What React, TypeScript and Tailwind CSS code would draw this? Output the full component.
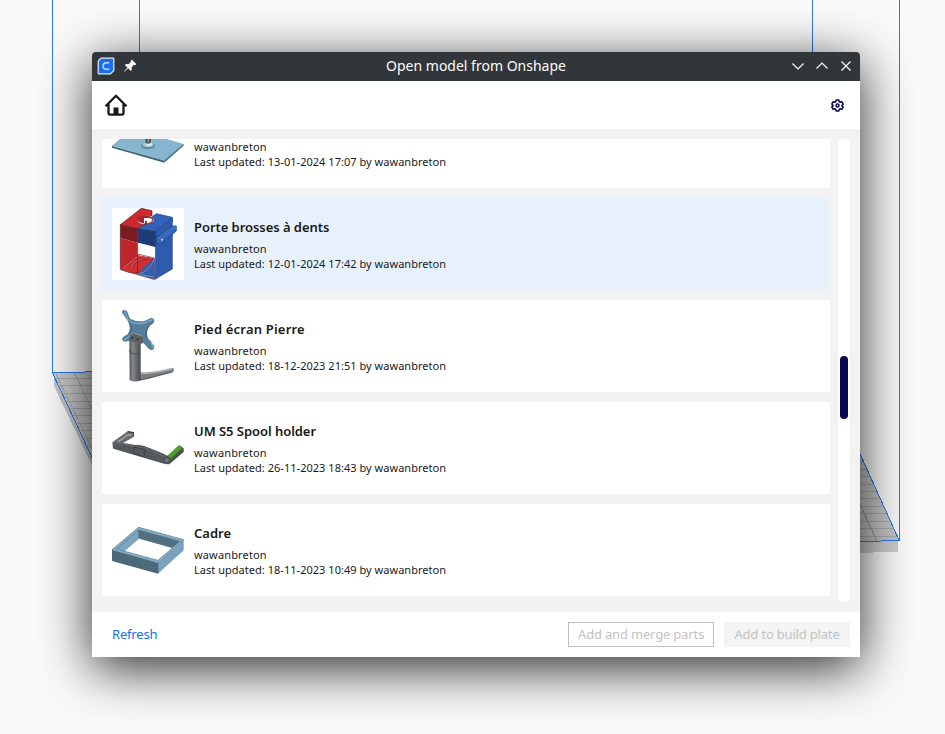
import type { ReactNode } from "react";

type Model = {
  title?: string;
  updated: string;
  art: ReactNode;
  selected?: boolean;
  tracking?: string;
};

const PlateArt = () => (
  <svg viewBox="30 -72 216 216" className="size-[72px]">
    <path d="M30 47 L90 -4 L245 42 L187 92Z" fill="#86b5cf" />
    <path d="M30 47 L187 91 L187 98 L30 53Z" fill="#3f6376" />
    <path d="M187 91 L245 41 L245 47 L187 98Z" fill="#4b758c" />
    <path d="M32 48 L187 91" stroke="#a9d2e6" strokeWidth="2" />
    <ellipse cx="138" cy="46" rx="21" ry="11" fill="#5c8196" />
    <ellipse cx="138" cy="43" rx="18" ry="9" fill="#9fbfce" />
    <ellipse cx="140" cy="42" rx="10" ry="6" fill="#dbe9ef" />
    <path d="M130 0H147V38Q138 44 130 38Z" fill="#4c5860" />
    <path d="M139 0V38" stroke="#8c989e" strokeWidth="4" />
  </svg>
);

const ToothbrushArt = () => (
  <svg viewBox="30 30 216 216" className="size-[72px] bg-white" strokeLinejoin="round">
    <path d="M55 80L118 31L150 38V53Q132 48 112 57Q102 66 110 75Q120 82 133 76L132 86L107 91Z" fill="#d1262b" stroke="#471c25" strokeWidth="2" />
    <path d="M55 80L107 91V134L55 120Z" fill="#7b1b20" />
    <path d="M55 120L107 134V172L55 214Z" fill="#bf252a" />
    <path d="M55 214L107 171L158 180V244Z" fill="#cf2d32" />
    <path d="M107 229L125 208L158 179V244Z" fill="#315fae" />
    <path d="M107 91L133 78Q148 78 156 69Q158 62 149 57L163 47L211 58V71L162 100Z" fill="#3261b7" stroke="#1e3e7d" strokeWidth="2" />
    <path d="M107 91L162 100V148L107 134Z" fill="#203c78" />
    <path d="M162 100L211 60V213L159 244Z" fill="#2e5bad" stroke="#244886" strokeWidth="2" />
    <path d="M107 134L159 148V181L107 170Z" fill="#fff" />
    <path d="M107 66Q104 55 119 53Q135 49 149 57Q159 65 148 74Q137 80 129 76V68H142V60H126V75Q112 76 107 66Z" fill="#9f2630" />
    <path d="M134 61Q147 57 151 65Q149 73 135 76Z" fill="#fff" />
    <path d="M162 120L211 84H223V99L178 137H163Z" fill="#3264b7" stroke="#203f7d" strokeWidth="2" />
    <path d="M165 123L213 87L221 89L184 118" fill="none" stroke="#5b8bd0" strokeWidth="2" />
    <ellipse cx="180" cy="125" rx="4" ry="5" fill="#cce1f8" stroke="#244b90" strokeWidth="2" />
    <g fill="none" stroke="#812531" strokeWidth="2">
      <path d="M58 211L111 169L157 180M59 214Q76 224 96 225Q130 226 153 196" />
      <path d="M84 211Q84 187 119 180Q145 176 153 187M92 215Q91 193 125 184Q142 181 151 187" />
    </g>
    <g fill="none" stroke="#eb777a" strokeWidth="1.5">
      <path d="M63 211L109 174L151 183M88 213Q87 190 120 183" />
    </g>
    <path d="M108 228Q124 225 138 212Q151 200 157 182M116 230L155 237" fill="none" stroke="#8cb0e0" strokeWidth="2" />
    <path d="M55 80V215L158 245M107 91V225" fill="none" stroke="#57202f" strokeWidth="2" />
  </svg>
);

const MonitorArt = () => (
  <svg viewBox="30 30 216 216" className="size-[72px]">
    <defs>
      <linearGradient id="post" x1="0" x2="1">
        <stop stopColor="#4f5356" /><stop offset=".3" stopColor="#85898b" />
        <stop offset=".65" stopColor="#66696b" /><stop offset="1" stopColor="#484b4d" />
      </linearGradient>
    </defs>
    <path d="M59 36Q65 25 75 34L84 56Q108 68 129 62L145 55Q156 51 157 62Q157 70 142 78Q130 93 138 115L156 137Q160 149 149 150Q143 151 132 137Q118 119 98 120L76 124Q64 129 60 117Q61 111 77 103Q89 88 78 64Z" fill="#527f9b" />
    <path d="M68 35L79 62Q96 74 127 69L151 59M68 119L85 108M144 121L154 143" fill="none" stroke="#80a9c1" strokeWidth="4" strokeLinecap="round" />
    <path d="M79 63Q96 80 83 104M143 77Q127 93 134 115" fill="none" stroke="#3c657d" strokeWidth="3" />
    <path d="M111 217L139 219Q170 216 213 204Q220 209 212 217L141 236Q119 241 108 243Z" fill="#7a7e80" />
    <path d="M113 220Q151 220 211 206" fill="none" stroke="#b2b6b8" strokeWidth="5" />
    <path d="M109 240L143 233L211 216" fill="none" stroke="#4a4d4f" strokeWidth="2" />
    <path d="M82 112Q99 101 116 117V239Q99 250 83 240Z" fill="url(#post)" />
    <path d="M86 101L94 97L123 107V130L113 131L82 122Z" fill="#5c6164" />
    <path d="M85 104L94 98L121 108" fill="none" stroke="#9ca1a4" strokeWidth="3" />
    <circle cx="90" cy="113" r="3" fill="#292c2e" /><circle cx="107" cy="118" r="3" fill="#292c2e" />
    <path d="M84 158Q99 166 114 160M82 147L85 158" fill="none" stroke="#3d4245" strokeWidth="2" />
  </svg>
);

const SpoolArt = () => (
  <svg viewBox="30 30 216 216" className="size-[72px]" strokeLinejoin="round">
    <path d="M32 120L77 88L95 91L96 104L58 126Z" fill="#686b6e" />
    <path d="M48 120L78 98L91 99" fill="none" stroke="#9c9fa1" strokeWidth="5" />
    <path d="M77 89L94 92V103" fill="none" stroke="#414446" strokeWidth="4" />
    <path d="M31 121Q39 117 51 121L101 129L127 132L180 153L202 164V187L184 184L33 139Z" fill="#55595b" />
    <path d="M34 122L52 123L105 134L127 136L184 163" fill="none" stroke="#707476" strokeWidth="2" />
    <path d="M34 139L183 183L200 186" fill="none" stroke="#3b3f41" strokeWidth="2" />
    <path d="M97 135L127 143V164L96 155ZM98 136L107 129L128 135" fill="none" stroke="#35393b" strokeWidth="2" />
    <path d="M196 161L232 130L245 139V150L202 187Z" fill="#4b504f" />
    <path d="M197 161L231 130L242 138L206 170Z" fill="#4f9a2c" />
    <path d="M199 160L231 131" stroke="#6cb33f" strokeWidth="3" />
    <circle cx="195" cy="175" r="8" fill="#686d70" stroke="#404446" strokeWidth="2" />
    <circle cx="194" cy="173" r="3" fill="#85898b" />
  </svg>
);

const FrameArt = () => (
  <svg viewBox="30 30 216 216" className="size-[72px]" strokeLinejoin="round">
    <path fillRule="evenodd" d="M30 137L110 69L245 107L167 177ZM67 142L112 103L211 132L168 169Z" fill="#82adc8" />
    <path d="M110 78L234 112L212 132L112 104Z" fill="#50707f" />
    <path d="M43 135L110 78V104L67 142Z" fill="#7ba5be" />
    <path d="M30 137L168 177V209L30 171Z" fill="#4d6978" />
    <path d="M168 177L245 107V139L168 209Z" fill="#79a3bd" />
    <path d="M30 137L110 70L245 107L168 177ZM43 135L110 78L234 112L168 169Z" fill="none" stroke="#557b92" strokeWidth="2" />
    <path d="M34 137L111 74L240 108L168 173Z" fill="none" stroke="#86aec5" strokeWidth="3" />
    <path d="M110 78V104M168 177V208" stroke="#3b596b" strokeWidth="1.5" />
  </svg>
);

const models: Model[] = [
  { updated: "13-01-2024 17:07", art: <PlateArt /> },
  { title: "Porte brosses à dents", updated: "12-01-2024 17:42", art: <ToothbrushArt />, selected: true, tracking: "tracking-[-0.05px]" },
  { title: "Pied écran Pierre", updated: "18-12-2023 21:51", art: <MonitorArt />, tracking: "tracking-[0.2px]" },
  { title: "UM S5 Spool holder", updated: "26-11-2023 18:43", art: <SpoolArt />, tracking: "tracking-[-0.05px]" },
  { title: "Cadre", updated: "18-11-2023 10:49", art: <FrameArt /> },
];

const leftRows = [378, 385, 393, 401, 408, 415, 423, 430, 438, 446];
const rightRows = [461, 469, 476, 484, 491, 498, 506, 513, 521, 528, 536];

function BuildVolume() {
  return (
    <svg viewBox="0 0 945 734" className="absolute inset-0 h-[734px] w-[945px]" shapeRendering="crispEdges">
      <defs>
        <clipPath id="leftBed"><path d="M53 373L96 371V466Z" /></clipPath>
        <clipPath id="rightBed"><path d="M856 445L899 540L856 542Z" /></clipPath>
      </defs>
      <path d="M54 375V386L96 474V460Z" fill="#c6c6c6" />
      <path d="M856 540H898V552H873V553H856Z" fill="#cdcdcd" />
      <path d="M53 373L96 371V466Z" fill="#c9c9c9" />
      <path d="M856 445L899 540L856 542Z" fill="#c6c6c6" />
      <g clipPath="url(#leftBed)" stroke="#aaa" fill="none">
        {leftRows.map((y) => <path key={y} d={`M53 ${y + 0.5}H96`} />)}
        <path d="M74 372L96 418" stroke="#a3a3a3" />
        <path d="M56 374L96 457" stroke="#a8a8a8" />
      </g>
      <g clipPath="url(#rightBed)" stroke="#aaa" fill="none">
        {rightRows.map((y) => <path key={y} d={`M856 ${y + 0.5}H899`} />)}
        <path d="M856 496L877 541" stroke="#999" />
      </g>
      <g fill="none" stroke="#2878f0">
        <path d="M52.5 0V373.5M812.5 0V60M899.5 0V540.5" />
        <path d="M53 372.5H85M85 371.5H96M53 374L96 466M856 445L899 540M899 540.5H881M881 541.5H856" />
      </g>
      <path d="M139.5 0V60" stroke="#707070" />
    </svg>
  );
}

function TitleBar() {
  return (
    <div className="grid h-[29px] shrink-0 grid-cols-[1fr_auto_1fr] items-center rounded-t-[4px] bg-[#31363b] pb-[2px] text-[#fcfcfc]">
      <div className="flex items-center gap-[7px] pl-[5px]">
        <svg viewBox="0 0 18 18" className="size-[18px]">
          <path d="M4 1.2H16.2Q16.8 1.2 16.8 1.8V13.5L13.5 16.8H1.8Q1.2 16.8 1.2 16.2V4Z" fill="#196ef0" stroke="#e5eefb" strokeWidth="1.2" />
          <path d="M12.3 5.8H9.2Q6.1 5.8 6.1 9T9.2 12.2H12.3" fill="none" stroke="#c7dcfb" strokeWidth="1.4" />
        </svg>
        <svg viewBox="0 0 16 16" className="size-4" fill="#fcfcfc">
          <path d="M9 2.2L10 1.8L14.2 6L13.7 7L11.7 7.1L9.5 9.4L9.8 12L8.8 13L6.2 10.3L2.4 13.8L2 13.4L5.5 9.6L2.9 6.9L4 6L6.5 6.3L8.8 4.1Z" />
        </svg>
      </div>
      <div className="text-[14px] leading-[27px]">Open model from Onshape</div>
      <div className="flex justify-end gap-2 pr-[6px]">
        <svg viewBox="0 0 16 16" className="size-4" fill="none" stroke="currentColor" strokeWidth="1.2"><path d="M2.5 5.5L8 11L13.5 5.5" /></svg>
        <svg viewBox="0 0 16 16" className="size-4" fill="none" stroke="currentColor" strokeWidth="1.2"><path d="M2.5 10.5L8 5L13.5 10.5" /></svg>
        <svg viewBox="0 0 16 16" className="size-4" fill="none" stroke="currentColor" strokeWidth="1.2"><path d="M3.5 3.5L12.5 12.5M12.5 3.5L3.5 12.5" /></svg>
      </div>
    </div>
  );
}

function ModelRow({ model }: { model: Model }) {
  return (
    <div className={`flex h-[92px] shrink-0 items-center gap-[10px] px-[10px] ${model.selected ? "bg-[#e7f1fc]" : "bg-white"}`}>
      {model.art}
      <div className="flex flex-col pb-px text-[11px] leading-[15px] whitespace-nowrap text-[#191919]">
        <div className={`mb-1 h-5 text-[13px] leading-5 font-semibold ${model.tracking ?? ""}`}>{model.title}</div>
        <div className="tracking-[0.15px]">wawanbreton</div>
        <div className="tracking-[0.03px]">Last updated: {model.updated} by wawanbreton</div>
      </div>
    </div>
  );
}

export default function App() {
  return (
    <div className="relative h-[734px] w-[945px] overflow-hidden bg-[#fafafa] font-['Noto_Sans',sans-serif]">
      <BuildVolume />
      <div className="absolute top-[52px] left-[92px] flex h-[605px] w-[768px] flex-col rounded-t-[4px] bg-white shadow-[0_11px_52px_rgba(0,0,0,0.84)]">
        <TitleBar />
        <div className="flex h-12 shrink-0 items-center justify-between pr-4 pl-3">
          <svg viewBox="0 0 24 24" className="size-6" fill="none" stroke="#191919" strokeWidth="2.3">
            <path d="M1.5 13.3L12 2.8L22.5 13.3M4.5 11V20Q4.5 21.6 6.1 21.6H17.9Q19.5 21.6 19.5 20V11" />
            <path d="M9.5 22V14.5H14.5V22Z" fill="#191919" stroke="none" />
          </svg>
          <svg viewBox="0 0 24 24" className="size-[13px]" fill="none" stroke="#08074f" strokeWidth="2.8" strokeLinejoin="round">
            <path d="M9.5 2H14.5L15.2 5L17 6L20 5L22.5 9.4L20.2 11.5V12.8L22.5 14.6L20 19L17 18L15.2 19L14.5 22H9.5L8.8 19L7 18L4 19L1.5 14.6L3.8 12.8V11.5L1.5 9.4L4 5L7 6L8.8 5Z" />
            <circle cx="12" cy="12" r="2.8" />
          </svg>
        </div>
        <div className="flex h-[483px] shrink-0 justify-between bg-[#f2f2f2] p-[10px]">
          <div className="h-[463px] w-[728px] overflow-hidden">
            <div className="-mt-[43px] flex flex-col gap-[10px]">
              {models.map((m) => <ModelRow key={m.updated} model={m} />)}
            </div>
          </div>
          <div className="h-[463px] w-3 rounded-[4px] bg-white px-[2px] pt-[217px]">
            <div className="h-[63px] w-2 rounded-full bg-[#08074f]" />
          </div>
        </div>
        <div className="flex h-[45px] items-center pr-[10px] pl-5 text-[13px] tracking-[-0.18px]">
          <div className="grow text-[#196ef0]">Refresh</div>
          <div className="flex h-[25px] w-[146px] items-center justify-center border border-[#c0c0c0] text-[#c3c3c3]">Add and merge parts</div>
          <div className="ml-[10px] flex h-[25px] w-[126px] items-center justify-center bg-[#f4f4f4] text-[#c3c3c3]">Add to build plate</div>
        </div>
      </div>
    </div>
  );
}
